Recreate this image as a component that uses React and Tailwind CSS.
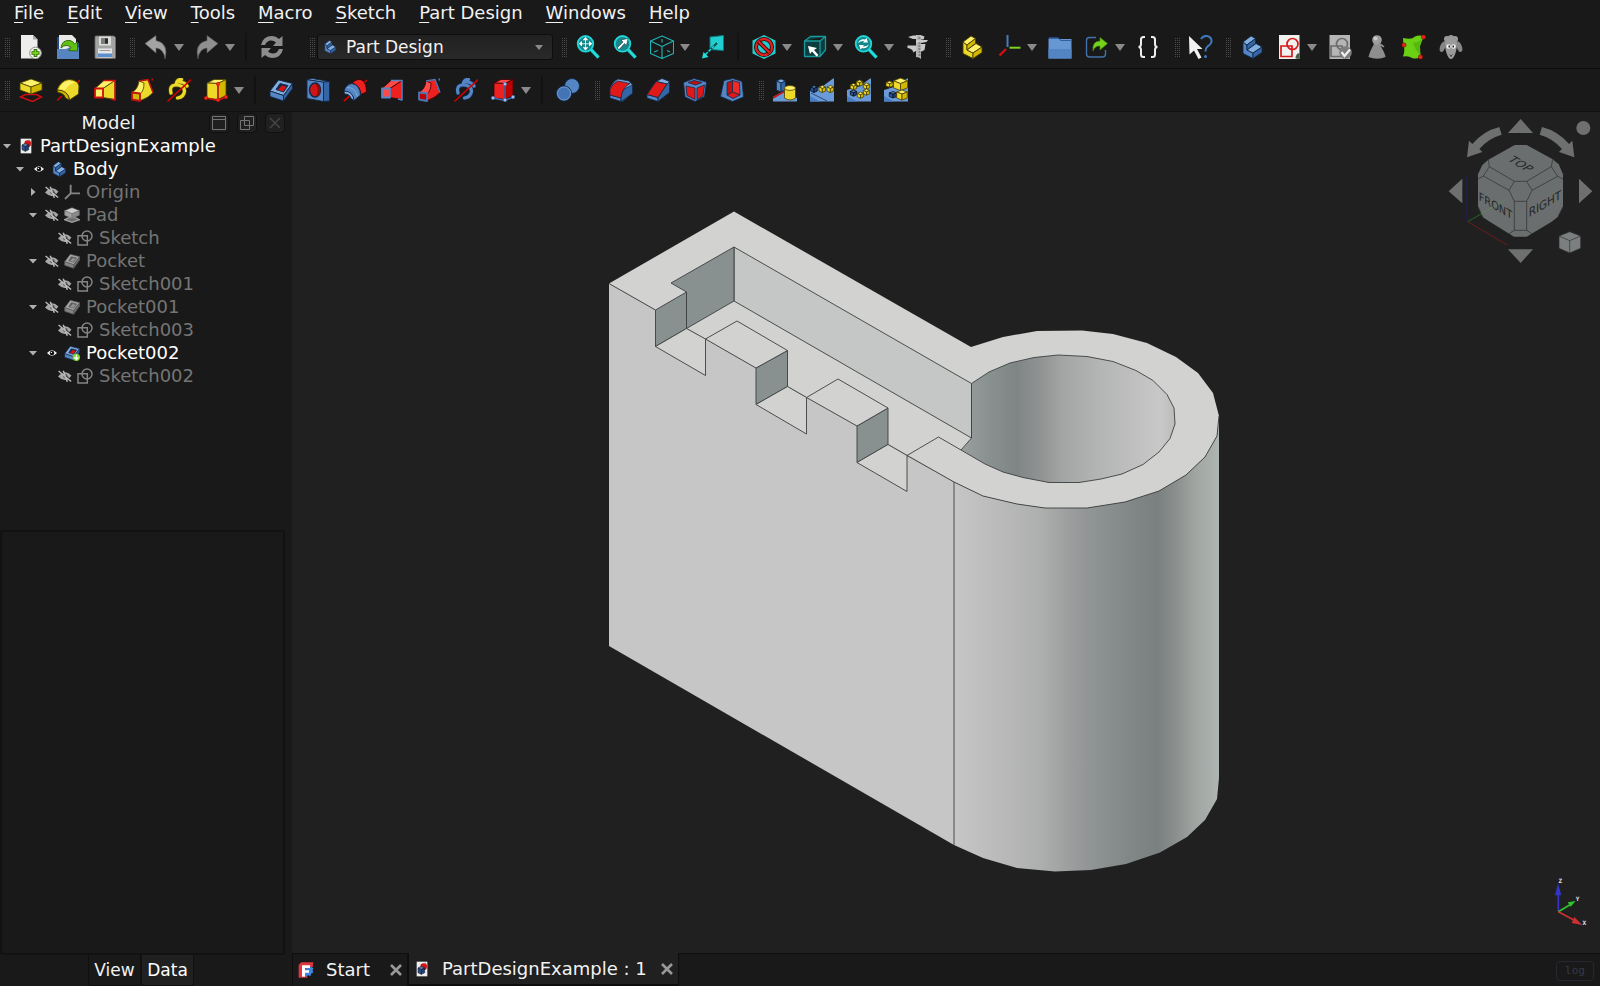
import { useState } from "react";

const YELLOW = { top: "#fdf06a", left: "#edd92a", right: "#d3b800", line: "#4a4000" };
const BLUE = { top: "#82aee0", left: "#5586c4", right: "#3465a4", line: "#12294a" };
const NAVY = { top: "#5a80b8", left: "#2f5590", right: "#20407a", line: "#08111f" };
const RED = { top: "#ff4a4a", left: "#ef2020", right: "#c00000", line: "#3a0000" };

// isometric box, (x, y) is the rear corner of the top face
const Box = ({ x, y, w, d, h, c }) => (
  <g stroke={c.line} strokeWidth="0.8" strokeLinejoin="round">
    <path fill={c.top} d={`M${x} ${y}l${w} ${d}l${-w} ${d}l${-w} ${-d}z`} />
    <path fill={c.left} d={`M${x - w} ${y + d}l${w} ${d}v${h}l${-w} ${-d}z`} />
    <path fill={c.right} d={`M${x + w} ${y + d}l${-w} ${d}v${h}l${w} ${-d}z`} />
  </g>
);

const StepShape = ({ c }) => (
  <g stroke={c.line} strokeWidth="0.9" strokeLinejoin="round">
    <path fill={c.left} d="M3 7l4 3v5l6 3v5.500l-10-5z" />
    <path fill={c.top} d="M3 7l8-6l4.500 2.500l-8.500 6.500z" />
    <path fill={c.right} d="M7 10l8.500-6.500v5l-8.500 6.500z" />
    <path fill={c.top} d="M7 15l9-6.500l6 3.500l-9 6z" />
    <path fill={c.right} d="M13 18l9-6v5.500l-9 6z" />
  </g>
);

const Lens = () => (
  <g>
    <path d="M14.500 14l8 8.500" stroke="#0c6f70" strokeWidth="4" />
    <path d="M14.500 14l8 8.500" stroke="#22dede" strokeWidth="2.600" />
    <circle cx="9.500" cy="8.800" r="7.800" fill="#15868a" stroke="#22d5d6" strokeWidth="1.800" />
  </g>
);

const PocketShape = ({ c, hole = "#d11" }) => (
  <g stroke={c.line} strokeWidth="0.9" strokeLinejoin="round">
    <path fill={c.top} d="M1 13l8.500-11l14 3.500l-9 12z" />
    <path fill={c.left} d="M1 13l13.500 4.500v5.500l-13.500-4.500z" />
    <path fill={c.right} d="M14.500 17.500l9-12v5l-9 12.500z" />
    <path fill={c.line} d="M7 11.500l4-6l8 2l-4.500 6.500z" />
    <path fill={hole} stroke="none" d="M9 11.800l4-4.300l4.500 1.300l-3.500 4.700z" />
  </g>
);

const LoftShape = ({ c, edge }) => (
  <g strokeLinejoin="round">
    <path fill={c.top} stroke={c.line} strokeWidth="0.8" d="M2 10.500l9-8h11l-12 8z" />
    <path fill={c.left} stroke={c.line} strokeWidth="0.8" d="M10 10.500l12-8v19l-12-2z" />
    <path fill="none" stroke={edge} strokeWidth="1.500" d="M11 2.500h11v19.500l-4-1" />
    <path fill={c.top} stroke={edge} strokeWidth="1.800" d="M2 10.500h8v9h-8z" />
  </g>
);

const PipeShape = ({ c, edge }) => (
  <g strokeLinejoin="round">
    <path fill={c.left} stroke={c.line} strokeWidth="0.8" d="M2.500 14Q8 11 9 3l9-1.500l5 13q-4 5-12.500 8z" />
    <path fill={c.top} stroke={c.line} strokeWidth="0.8" d="M2.500 14Q8 11 9 3l5 2Q14 13 10 16z" />
    <path fill="none" stroke={edge} strokeWidth="1.500" d="M9 3l9-1.500l5 13M22.500 .500l-.500 2" />
    <path fill={c.right} stroke={edge} strokeWidth="1.800" d="M2 14.500l8 1v7.500l-8-1.500z" />
  </g>
);

const helixPath = "M4 15Q2 7 9 7q8 0 8.500 6q-.500 6-7 7M9 6.500Q10 1 14.500 1.500M12 4q6 0 8 4";

const HelixShape = ({ c }) => (
  <g fill="none" strokeLinecap="round">
    <path d={helixPath} stroke={c.line} strokeWidth="4.600" />
    <path d={helixPath} stroke={c.left} strokeWidth="3.200" />
    <path d="M1 23L23.500 2" stroke="#d40000" strokeWidth="1.600" />
  </g>
);

const PrimitiveShape = ({ c, edge, dot }) => (
  <g>
    <path fill={c.top} stroke={c.line} strokeWidth="0.8" d="M3 5l7-3.500h12l-8 4z" strokeLinejoin="round" />
    <path fill={c.left} stroke={c.line} strokeWidth="0.8" d="M3 5l11 .500v16l-11-1.500z" strokeLinejoin="round" />
    <path fill={c.right} stroke={c.line} strokeWidth="0.8" d="M14 5.500l8-4v16l-8 4z" strokeLinejoin="round" />
    <path d="M2 20l12 2.500l8-3.500M14 22V6" stroke={edge} strokeWidth="1.400" fill="none" />
    <g fill={dot} stroke={edge} strokeWidth="0.600">
      <circle cx="2" cy="20" r="1.700" />
      <circle cx="14" cy="22" r="1.700" />
      <circle cx="22" cy="19" r="1.700" />
      <circle cx="14" cy="6" r="1.700" />
    </g>
  </g>
);

const DocShape = () => (
  <g>
    <path d="M4 1h16v22h-16z" fill="#eeeeec" />
    <path d="M16 1l4 4h-4z" fill="#babdb6" />
    <circle cx="14.500" cy="8.500" r="5" fill="#cf1515" />
    <Box x={11} y={8} w={5} d={2.5} h={7} c={NAVY} />
  </g>
);

const PlanePatch = () => (
  <g>
    <path d="M0 12l13-4l10-7.500h1v23h-24z" fill="#6a9bd8" />
    <path d="M0 18l10 5.500h-10z" fill="#4a7fc4" />
  </g>
);

const icons = {
  new: (
    <g>
      <path d="M2 0h12l4.500 4.500v19h-16.500z" fill="#ededeb" />
      <path d="M14 0v4.500h4.500z" fill="#a9aba6" />
      <circle cx="16.500" cy="18" r="5.800" fill="#f4f4f2" stroke="#8d8f8a" />
      <path d="M16.500 14v8M12.500 18h8" stroke="#2f6b09" strokeWidth="3.600" />
      <path d="M16.500 14.800v6.400M13.300 18h6.400" stroke="#73d216" strokeWidth="1.800" />
    </g>
  ),
  open: (
    <g>
      <path d="M1 2h5v14h-5zM20 8h3v12h-3z" fill="#204a87" />
      <path d="M3 0h13l4 4v12h-17z" fill="#e9e9e7" />
      <path d="M1 14h9l3-1.500h10v11.500h-22z" fill="#5584c0" />
      <path d="M5 13Q6 4.500 14 5.500q3 .500 4.500 3.500l3-2v9l-9-.500l2.500-3Q10 8 5 13z" fill="#5fbf12" stroke="#2d6306" strokeWidth="0.900" />
    </g>
  ),
  save: (
    <g>
      <path d="M2 2q0-1 1-1h18l1.500 1.500v20q0 1-1 1h-18.500q-1 0-1-1z" fill="#a2a4a1" stroke="#6b6d6a" strokeWidth="0.800" />
      <path d="M6 1.500h12v9h-12z" fill="#dcdcda" />
      <path d="M8 3h7v6h-7z" fill="#7c7e7b" />
      <path d="M12 3.500h3v5h-3z" fill="#2b2b2b" />
      <path d="M5 13.500h14v9h-14z" fill="#e6e6e6" />
      <path d="M5 18.500h14v3.500h-14z" fill="#5c8fd0" />
      <path d="M6.500 15.500h11" stroke="#9a9a9a" />
    </g>
  ),
  undo: <path d="M1 8.500L12 .500v5Q25 8 21 24Q20 14 12 13v5z" fill="#a3a3a3" stroke="#606060" strokeWidth="0.600" />,
  redo: <path d="M23 8.500L12 .500v5Q-1 8 3 24Q4 14 12 13v5z" fill="#8f8f8f" stroke="#505050" strokeWidth="0.600" />,
  refresh: (
    <g fill="#8d8d8d">
      <path d="M1 10Q3 1 12 1q4 0 7 3l3.500-3v10h-9.500l3-3.500q-2-2-5-2q-4 0-6 4.500z" />
      <path d="M23 14Q21 23 12 23q-4 0-7-3l-3.500 3v-10h9.500l-3 3.500q2 2 5 2q4 0 6-4.500z" />
    </g>
  ),
  fitAll: (
    <g>
      <Lens />
      <path d="M9.500 2l2.800 3.300h-5.600zM9.500 15.600l2.800-3.300h-5.600zM2.700 8.800l3.300-2.800v5.600zM16.300 8.800l-3.300-2.800v5.600z" fill="#fff" />
      <path d="M9.500 5v7.500M6 8.800h7" stroke="#fff" strokeWidth="0.800" />
    </g>
  ),
  fitSel: (
    <g>
      <Lens />
      <path d="M4 13l6-6l-2-2l7-1.500l-1.500 7l-2-2l-5.500 6z" fill="#fff" stroke="#123" strokeWidth="0.500" />
    </g>
  ),
  isoView: (
    <g fill="none" stroke="#1fb5b6" strokeWidth="1.100" strokeLinejoin="round">
      <path d="M12 1l11.500 5v12.500l-11.500 5l-11.500-5v-12.500zM.500 6l11.500 5.500l11.500-5.500M12 11.500v12" />
      <path d="M12 4v3.500M4 17l4-1.500M17 15.500l3 1.500" />
    </g>
  ),
  alignView: (
    <g>
      <path d="M9 2l13.500-1.500v15l-13.500-1z" fill="#21cfd0" stroke="#0c7c7d" />
      <path d="M16 8L4 20" stroke="#0b4f50" strokeWidth="2.200" />
      <path d="M13 11L4 20" stroke="#25dede" strokeWidth="1.300" strokeDasharray="3 1.500" />
      <path d="M1 23.500l1.500-6.500l5 5z" fill="#25dede" />
    </g>
  ),
  drawStyle: (
    <g>
      <path d="M12 0l11.500 5.500v13l-11.500 5.500l-11.500-5.500v-13z" fill="#22cdce" />
      <circle cx="12" cy="12" r="8" fill="none" stroke="#280000" strokeWidth="4" />
      <circle cx="12" cy="12" r="8" fill="none" stroke="#d22" strokeWidth="2.400" />
      <path d="M6.500 6.500l11 11" stroke="#280000" strokeWidth="4" />
      <path d="M6.500 6.500l11 11" stroke="#d22" strokeWidth="2.400" />
    </g>
  ),
  selView: (
    <g>
      <path d="M1.500 6l6-4.500h15v13.500l-5.500 6.500h-15.500zM1.500 6h15.500l5.500-4.500M17 6v15.500" fill="#0b3d3e" stroke="#189b9c" strokeWidth="1.300" strokeLinejoin="round" />
      <path d="M5 11l9 2l-3 2l4.500 5l-2 1.500l-4.500-5l-2 2.500z" fill="#fff" />
    </g>
  ),
  zoomRefresh: (
    <g>
      <Lens />
      <path d="M4 8q2-4.500 7-3.500l1.500-1.500l1.500 4.500h-5l1.200-1.500q-3.200-.500-6.200 2zM15 9.500q-2 4.500-7 3.500l-1.500 1.500l-1.500-4.500h5l-1.200 1.500q3.200 .500 6.200-2z" fill="#f2ffff" />
    </g>
  ),
  caliper: (
    <g transform="translate(1.5 0)">
      <path d="M9.500 0h5v24l-2-1.500l-3-.500z" fill="#b4b4b4" />
      <path d="M1.500 2l5-1.500h4v3.500h-4zM14 0l4 1.500l-1 3h-3zM9.500 5h12l-1.500 2l-5.500 1h-5zM1 10.500h9v5l-3 2q-1-4-6-4.500zM14 9h5l-1 6l-4 2z" fill="#c9c9c9" />
      <path d="M12 3h2M12 8h2M12 11h2M12 14h2M12 17h2M12 20h2" stroke="#444" strokeWidth="0.900" />
    </g>
  ),
  part: <StepShape c={YELLOW} />,
  body: <StepShape c={BLUE} />,
  axes: (
    <g fill="none" strokeWidth="2">
      <path d="M10.500 0v12" stroke="#4a7ab8" />
      <path d="M12.500 12.700h11" stroke="#7ed321" />
      <path d="M9 14l-6.500 6.500" stroke="#d31010" strokeWidth="2.400" />
    </g>
  ),
  folder: (
    <g>
      <path d="M1 2h9l2 3h-11z" fill="#204a87" />
      <path d="M.500 4h23v19.500h-23z" fill="#6797d2" />
      <path d="M.500 3.500h10.500l1.500 2h11" stroke="#33609c" fill="none" />
      <path d="M.500 14h23v9.500h-23z" fill="#5384c4" />
    </g>
  ),
  link: (
    <g>
      <path d="M11 2.500h-6.500q-3 0-3 3v13.500q0 3 3 3h13q3 0 3-3v-4" fill="none" stroke="#4072ae" strokeWidth="1.400" />
      <path d="M8 16Q7 6 15 6v-3.500l7.500 6l-7.500 6.500v-4q-5-.500-7 5z" fill="#74d31c" stroke="#3e8a06" strokeWidth="0.700" />
    </g>
  ),
  braces: (
    <path
      d="M9 2h-1.500q-2.500 0-2.500 2.500v4.500q0 3-2.500 3q2.500 0 2.500 3v4.500q0 2.500 2.500 2.500h1.500M15 2h1.500q2.500 0 2.500 2.500v4.500q0 3 2.500 3q-2.500 0-2.500 3v4.500q0 2.500-2.500 2.500h-1.500"
      fill="none"
      stroke="#eeeeec"
      strokeWidth="2"
    />
  ),
  whatsThis: (
    <g>
      <path d="M12 4q2-3.500 6-3q5 1 4.500 6q-1 3-4 4.500q-2 1.500-2 5" fill="none" stroke="#3f79bb" strokeWidth="2" />
      <circle cx="16.500" cy="21.500" r="1.500" fill="#3f79bb" />
      <path d="M0 1l13.500 13h-5.500l4.500 8.500l-3 1.500l-4.500-8.500l-4.500 4z" fill="#f2f2f2" />
    </g>
  ),
  newSketch: (
    <g>
      <path d="M2 0h20.500v24h-20.500z" fill="#f1f1ef" />
      <path d="M18.500 23.500q0-5 4-5.500v6z" fill="#4c5a4c" />
      <g fill="none" stroke="#d51a1a" strokeWidth="1.700">
        <path d="M4 11h11v10.500h-11z" />
        <circle cx="15.500" cy="9" r="5.500" />
      </g>
    </g>
  ),
  validate: (
    <g>
      <path d="M1.500 0h20.500v24h-20.500z" fill="#b5b5b5" />
      <g fill="none" stroke="#6c6c6c" strokeWidth="1.700">
        <path d="M3 11h11v10.500h-11z" />
        <circle cx="14" cy="9" r="5.500" />
      </g>
      <circle cx="17.500" cy="17.500" r="6.300" fill="#7d7d7d" />
      <path d="M13.500 17l3 4l5.500-6.500" fill="none" stroke="#f0f0f0" strokeWidth="2.200" />
    </g>
  ),
  pawn: (
    <g fill="#8e8e8e">
      <path d="M9 8h5l1 2q5 8 5.500 12q-8 3.500-17 0q1-5 5-12z" />
      <circle cx="12" cy="5" r="4.800" fill="#9d9d9d" />
      <circle cx="10.500" cy="3.500" r="2" fill="#c9c9c9" />
      <path d="M14 8q4 1 5.500 3.500l-1 1q-3-2-5-2.500z" />
    </g>
  ),
  binder: (
    <g>
      <path d="M1 3q9 2 12-1.500q4-2 9 0q-3 6-4 10q0 6 1 10q-3 3-9 1.500q-3-2.500-9-1.500q2-5 1-9q-1-5-1-9.500z" fill="#6ad014" />
      <path d="M11 7q5 2 9-4q-3 7-2 17q-5-5-7-13z" fill="#4aa80c" opacity="0.600" />
      <g fill="#e02416" stroke="#7a0e06" strokeWidth="0.500">
        <circle cx="21.500" cy="2" r="2.200" />
        <circle cx="2" cy="10" r="2.200" />
        <circle cx="18.500" cy="22" r="2.200" />
      </g>
    </g>
  ),
  sheep: (
    <g fill="#9a9a9a">
      <path d="M5.500 6Q1 8 .500 15q1 3 3.500 1.500q3-4 2.500-8zM18.500 6Q23 8 23.500 15q-1 3-3.500 1.500q-3-4-2.500-8z" fill="#868686" />
      <path d="M6 7q0-5 6-5t6 5q0 7-1.500 11q-2 6-4.500 6t-4.500-6q-1.500-4-1.500-11z" />
      <circle cx="8" cy="4" r="3" />
      <circle cx="12" cy="3" r="3" />
      <circle cx="16" cy="4" r="3" />
      <circle cx="9.500" cy="11.500" r="2.200" fill="#f2f2f2" />
      <circle cx="14.500" cy="11.500" r="2.200" fill="#f2f2f2" />
      <path d="M9.500 10.500h1.500v2h-1.500zM13.500 10.500h1.500v2h-1.500z" fill="#222" />
      <path d="M10.500 19.500l1.500 1.500l1.500-1.500M12 21v1" stroke="#444" fill="none" />
    </g>
  ),
  pad: (
    <g>
      <path d="M1.500 19l5-2.500h11l5 2.500l-9 4.500z" fill="none" stroke="#d01010" strokeWidth="1.500" />
      <Box x={12} y={1} w={11} d={4} h={7} c={YELLOW} />
    </g>
  ),
  revolution: (
    <g strokeLinejoin="round">
      <path d="M14 12L24 2" stroke="#d40000" strokeWidth="1.600" />
      <path fill={YELLOW.left} stroke={YELLOW.line} strokeWidth="0.9" d="M1 12Q5 2 13 1.500Q22 2 23 8l-.500 8l-9 6Q13 13 1 12z" />
      <path fill={YELLOW.top} d="M3 11Q7 3 13 2.500Q17 3 19 5Q12 6 9 12.500Q6 11 3 11z" />
      <path fill={YELLOW.right} stroke={YELLOW.line} strokeWidth="0.9" d="M1 12Q12 12 13.500 22l-4-2Q8 15 2 14.500z" />
      <path d="M1 22.500l5-4.500" stroke="#d40000" strokeWidth="1.600" />
    </g>
  ),
  loft: <LoftShape c={YELLOW} edge="#d01010" />,
  pipe: <PipeShape c={YELLOW} edge="#c01010" />,
  helix: <HelixShape c={YELLOW} />,
  primitive: <PrimitiveShape c={YELLOW} edge="#d01010" dot="#ee2a1a" />,
  pocket: <PocketShape c={BLUE} />,
  hole: (
    <g stroke={BLUE.line} strokeLinejoin="round" strokeWidth="0.9">
      <path fill={BLUE.left} d="M1 1.500l16.500 2.500v19.500l-16.500-3z" />
      <path fill={BLUE.top} d="M1 1.500l5-1l17.500 3l-6 .500z" />
      <path fill={BLUE.right} d="M17.500 4l6-.500v19.500l-6 .500z" />
      <ellipse cx="9" cy="12" rx="5.500" ry="7" fill="#d01515" strokeWidth="1.400" />
      <path d="M9 5.500q5 5 1 13q4.500 0 4.500-6.500t-5.500-6.500z" fill="#8a0c0c" stroke="none" />
    </g>
  ),
  groove: (
    <g strokeLinejoin="round" strokeWidth="0.9">
      <path d="M1 23L24 2" stroke="#d40000" strokeWidth="1.600" />
      <path fill={RED.left} stroke={RED.line} d="M9 5Q14 0 19 2Q23.500 5 23.500 14l-5.500 2.500Q17 7 9 5z" />
      <path fill={BLUE.left} stroke={BLUE.line} d="M1 13Q3 6 9 5.500Q17 7 17.500 17l-6.500 5.500Q10 14 1 13z" />
      <path fill={BLUE.top} stroke={BLUE.line} d="M1 13Q10 13 11 22.500l-3-2Q7 16 1.500 16z" />
      <path fill="none" stroke={BLUE.top} d="M4 9.500Q12 9 14.500 18.500" />
      <path d="M1 23l5-4.500" stroke="#d40000" strokeWidth="1.600" />
    </g>
  ),
  subLoft: <LoftShape c={RED} edge="#5586c4" />,
  subPipe: <PipeShape c={RED} edge="#4a78b5" />,
  subHelix: <HelixShape c={BLUE} />,
  subPrimitive: <PrimitiveShape c={RED} edge="#3f6fb0" dot="#9cc0ee" />,
  boolean: (
    <g stroke={BLUE.line}>
      <circle cx="16" cy="8" r="7.500" fill="#5586c4" />
      <circle cx="8" cy="15.500" r="7.500" fill="#4474b4" stroke="#12294a" strokeWidth="1" />
      <circle cx="8" cy="15.500" r="6.600" fill="none" stroke="#86b0e4" strokeWidth="0.700" />
    </g>
  ),
  fillet: (
    <g stroke={BLUE.line} strokeLinejoin="round" strokeWidth="0.8">
      <path fill={BLUE.top} d="M1 11q2-7 8-10l11 2l3.500 4v8l-10 8.500l-12.500-4z" />
      <path fill={BLUE.left} d="M1 17l11 3v3.500l-11-3.500z" />
      <path fill={BLUE.right} d="M12 20q0-8 5-10l6.500-3v8.500l-11.500 8z" />
      <path fill="#e01818" d="M1 11.500q2-6 8-8.500l12 2.500q-8 4-9 14.500l-11-3z" />
    </g>
  ),
  chamfer: (
    <g stroke={BLUE.line} strokeLinejoin="round" strokeWidth="0.8">
      <path fill={BLUE.top} d="M10 3.500l6-3l7.500 3l-2.500 2.500z" />
      <path fill={BLUE.left} d="M1 16.500l11 3v4l-11-3.500z" />
      <path fill={BLUE.right} d="M12 19.500l9-13.500l2.500-2.500v11l-11.500 9z" />
      <path fill="#e01818" d="M1 16.500l9-13l11 2.500l-9 13.500z" />
    </g>
  ),
  draft: (
    <g stroke={BLUE.line} strokeLinejoin="round" strokeWidth="0.8">
      <path fill={BLUE.left} d="M.500 4.500l10.500-4l12.500 3.500l-2 14.500l-9.500 5l-10-4.500z" />
      <path fill="#e01818" d="M3 8l9 2v11.500l-8-4zM14 10l7.500-3l-1.500 11l-6 3.500z" />
      <path fill="#c01010" d="M5 4.500l6-2l8 2l-6.500 2.500z" />
    </g>
  ),
  thickness: (
    <g stroke={BLUE.line} strokeLinejoin="round" strokeWidth="0.8">
      <path fill={BLUE.left} d="M4 2.500l9-2l9 3l1.500 15.500l-11 4.500l-12-5z" />
      <path fill="#c01010" d="M7 4.500l5.500-2v11.500l-5.500 3z" />
      <path fill="#ef2a2a" d="M12.500 2.500l7 2l.500 12.500l-7.500-3z" />
      <path fill="#e01818" d="M7 17l5.500-3l7.500 3l-7 3.500z" />
    </g>
  ),
  mirrored: (
    <g>
      <path d="M0 19l12-7l12 8v3.500h-24z" fill="#6a9bd8" />
      <path d="M0 20l17-10" stroke="#cc1010" strokeWidth="1.600" />
      <Box x={8} y={1} w={4.5} d={2} h={9} c={BLUE} />
      <path d="M11.500 10q5.500-4 11 0v10q-5.500 4-11 0z" fill="#edd92a" stroke="#4a4000" strokeWidth="0.8" />
      <ellipse cx="17" cy="10" rx="5.500" ry="2.400" fill="#fdf06a" stroke="#4a4000" strokeWidth="0.8" />
    </g>
  ),
  linear: (
    <g>
      <PlanePatch />
      <path d="M1 15l16 8" stroke="#1a3a68" strokeWidth="0.800" />
      <Box x={4} y={7.5} w={3.3} d={1.5} h={4} c={NAVY} />
      <Box x={12.3} y={7.5} w={3.3} d={1.5} h={4} c={YELLOW} />
      <Box x={20.3} y={7.5} w={3.3} d={1.5} h={4} c={YELLOW} />
    </g>
  ),
  polar: (
    <g>
      <PlanePatch />
      <Box x={12.5} y={2} w={3.2} d={1.4} h={3.4} c={YELLOW} />
      <Box x={6.5} y={5.5} w={3.2} d={1.4} h={3.4} c={YELLOW} />
      <Box x={19.5} y={5} w={3.2} d={1.4} h={3.4} c={YELLOW} />
      <Box x={19.5} y={11} w={3.2} d={1.4} h={3.4} c={YELLOW} />
      <Box x={6.5} y={12} w={3.2} d={1.4} h={3.4} c={NAVY} />
      <Box x={13.5} y={14} w={3.2} d={1.4} h={3.4} c={YELLOW} />
    </g>
  ),
  multi: (
    <g>
      <PlanePatch />
      <Box x={5.5} y={3} w={3.5} d={1.4} h={3.5} c={YELLOW} />
      <Box x={16.5} y={0} w={7} d={2.8} h={7} c={YELLOW} />
      <Box x={9} y={13.5} w={3.7} d={1.4} h={3.7} c={NAVY} />
      <Box x={18} y={12} w={5.3} d={2} h={6} c={YELLOW} />
    </g>
  ),
  doc: <DocShape />,
  origin: <path d="M10 1v13l-8.500 8.500M10 14h14" fill="none" stroke="#858585" strokeWidth="2.800" />,
  padTree: (
    <g>
      <path d="M1 19l6-3h10l6 3l-11 4z" fill="#6c6c6c" stroke="#9c9c9c" strokeWidth="2" />
      <Box x={12} y={1} w={11} d={4.5} h={7} c={{ top: "#cccccc", left: "#a2a2a2", right: "#8a8a8a", line: "#777777" }} />
    </g>
  ),
  pocketTree: <PocketShape c={{ top: "#a5a5a5", left: "#858585", right: "#6c6c6c", line: "#5a5a5a" }} hole="#929292" />,
  pocketTip: (
    <g>
      <PocketShape c={BLUE} />
      <circle cx="18.500" cy="18.500" r="5.500" fill="#7cd823" />
      <path d="M18.500 14.500v7M15.500 18.500l3 3.500l3-3.500" stroke="#fff" strokeWidth="1.800" fill="none" />
    </g>
  ),
  sketchTree: (
    <g fill="none" stroke="#858585" strokeWidth="2.200">
      <path d="M1.500 8.500h14v14h-14z" />
      <circle cx="15" cy="9" r="7.500" />
    </g>
  ),
  eye: (
    <g>
      <path d="M0 12Q12-1 24 12Q12 25 0 12z" fill="#f4f4f4" />
      <circle cx="12" cy="12" r="5.500" fill="#111" />
      <circle cx="10.500" cy="10.500" r="1.600" fill="#fff" />
    </g>
  ),
  eyeOff: (
    <g>
      <path d="M0 13Q11-1 23 11Q13 26 0 13z" fill="#a8a8a8" />
      <circle cx="12.500" cy="12" r="4" fill="#6a6a6a" />
      <path d="M3 2.500l20 17.500" stroke="#1b1b1b" strokeWidth="2" />
      <path d="M1 3.500l21.500 18M9 3l7 19" stroke="#b9b9b9" strokeWidth="2.600" />
    </g>
  ),
  freecad: (
    <g>
      <path d="M1 4l4-3.500h18l-1 7l-8 2v14h-13z" fill="#e0363f" />
      <path d="M13 9h4l2-2l4 2l-1 4l1 3l-3 1l-1 4l-4-1l-3 2l-2-2v-5z" fill="#3f86dd" />
      <path d="M6 5h12v4h-7.500v3.500h6v3.500h-6v6h-4.500z" fill="#fff" />
    </g>
  ),
};

const Icon = ({ name, className = "size-6" }) => (
  <svg viewBox="0 0 24 24" className={`shrink-0 ${className}`} aria-hidden="true">
    {icons[name]}
  </svg>
);

const Grip = () => (
  <svg viewBox="0 0 12 24" className="w-3 h-6 shrink-0" aria-hidden="true" shapeRendering="crispEdges">
    <path d="M5.500 3v19M7.500 3v19M9.500 3v19" stroke="#4b4b4b" strokeDasharray="1 1" />
  </svg>
);

const Divider = () => <div className="mx-1.5 h-7 w-0.5 shrink-0 bg-[#121212]" />;

const Tool = ({ name, label, menu }) => (
  <>
    <button aria-label={label} className="flex h-9 w-[37px] shrink-0 items-center justify-center">
      <Icon name={name} />
    </button>
    {menu && (
      <button aria-label={`${label} options`} className="flex h-9 w-3.5 shrink-0 items-center">
        <svg viewBox="0 0 10 7" className="w-2.5 h-[7px]">
          <path d="M0 0h10l-5 7z" fill="#8a8a8a" />
        </svg>
      </button>
    )}
  </>
);

const Group = ({ items, className = "" }) => (
  <div className={`flex items-center ${className}`}>
    <Grip />
    {items.map(([name, label, menu], i) =>
      name === "|" ? <Divider key={i} /> : <Tool key={i} name={name} label={label} menu={menu} />
    )}
  </div>
);

const menus = ["File", "Edit", "View", "Tools", "Macro", "Sketch", "Part Design", "Windows", "Help"];

const fileTools = [["new", "New"], ["open", "Open"], ["save", "Save"]];
const editTools = [["undo", "Undo", true], ["redo", "Redo", true], ["|"], ["refresh", "Refresh"]];
const viewTools = [
  ["fitAll", "Fit all"],
  ["fitSel", "Fit selection"],
  ["isoView", "Isometric", true],
  ["alignView", "Align to selection"],
  ["|"],
  ["drawStyle", "Draw style", true],
  ["selView", "Selection view", true],
  ["zoomRefresh", "Zoom", true],
  ["caliper", "Measure"],
];
const structureTools = [
  ["part", "Create part"],
  ["axes", "Coordinate system", true],
  ["folder", "Create group"],
  ["link", "Make link", true],
  ["braces", "Expressions"],
];
const helpTools = [["whatsThis", "What's this?"]];
const bodyTools = [
  ["body", "Create body"],
  ["newSketch", "Create sketch", true],
  ["validate", "Validate sketch"],
  ["pawn", "Check geometry"],
  ["binder", "Shape binder"],
  ["sheep", "Clone"],
];
const modelTools = [
  ["pad", "Pad"],
  ["revolution", "Revolution"],
  ["loft", "Additive loft"],
  ["pipe", "Additive pipe"],
  ["helix", "Additive helix"],
  ["primitive", "Additive primitive", true],
  ["|"],
  ["pocket", "Pocket"],
  ["hole", "Hole"],
  ["groove", "Groove"],
  ["subLoft", "Subtractive loft"],
  ["subPipe", "Subtractive pipe"],
  ["subHelix", "Subtractive helix"],
  ["subPrimitive", "Subtractive primitive", true],
  ["|"],
  ["boolean", "Boolean operation"],
];
const dressTools = [
  ["fillet", "Fillet"],
  ["chamfer", "Chamfer"],
  ["draft", "Draft"],
  ["thickness", "Thickness"],
];
const patternTools = [
  ["mirrored", "Mirrored"],
  ["linear", "Linear pattern"],
  ["polar", "Polar pattern"],
  ["multi", "Multi transform"],
];

const tree = [
  { label: "PartDesignExample", icon: "doc", depth: 0, arrow: "down", on: true },
  { label: "Body", icon: "body", depth: 1, arrow: "down", eye: "eye", on: true },
  { label: "Origin", icon: "origin", depth: 2, arrow: "right", eye: "eyeOff" },
  { label: "Pad", icon: "padTree", depth: 2, arrow: "down", eye: "eyeOff" },
  { label: "Sketch", icon: "sketchTree", depth: 3, eye: "eyeOff" },
  { label: "Pocket", icon: "pocketTree", depth: 2, arrow: "down", eye: "eyeOff" },
  { label: "Sketch001", icon: "sketchTree", depth: 3, eye: "eyeOff" },
  { label: "Pocket001", icon: "pocketTree", depth: 2, arrow: "down", eye: "eyeOff" },
  { label: "Sketch003", icon: "sketchTree", depth: 3, eye: "eyeOff" },
  { label: "Pocket002", icon: "pocketTip", depth: 2, arrow: "down", eye: "eye", on: true },
  { label: "Sketch002", icon: "sketchTree", depth: 3, eye: "eyeOff" },
];

const indent = ["pl-0", "pl-[13px]", "pl-[26px]", "pl-[39px]"];

const TreeRow = ({ row }) => (
  <li
    role="treeitem"
    className={`flex h-[23px] items-center gap-1 ${indent[row.depth]} ${row.on ? "text-white" : "text-[#757575]"}`}
  >
    <span className="flex w-3.5 justify-center">
      {row.arrow && (
        <svg viewBox="0 0 8 8" className="size-2">
          <path d={row.arrow === "down" ? "M0 2h8l-4 4.500z" : "M2 0v8l4.500-4z"} fill="#b0b0b0" />
        </svg>
      )}
    </span>
    {row.eye && (
      <button aria-label={`Toggle ${row.label}`}>
        <Icon name={row.eye} className={row.eye === "eye" ? "mx-[3px] size-2.5" : "mx-px size-3.5"} />
      </button>
    )}
    <Icon name={row.icon} className="size-4" />
    <span className="ml-0.5">{row.label}</span>
  </li>
);

const PanelButton = ({ label, children }) => (
  <button aria-label={label} className="flex size-5 items-center justify-center rounded border border-[#101010] bg-[#202020]">
    <svg viewBox="0 0 16 16" className="size-4" fill="none" stroke="#757575">
      {children}
    </svg>
  </button>
);

const CloseMark = ({ label }) => (
  <button aria-label={label}>
    <svg viewBox="0 0 14 14" className="size-3.5">
      <path d="M2 2l10 10M12 2L2 12" stroke="#999" strokeWidth="2.600" />
    </svg>
  </button>
);

const topOuter =
  "M609 283.500L734 211.500L971 347L1003 337L1037 331L1082 330.500L1113 334L1147 343L1176 357L1198 373L1213 393L1219 416L1217 436L1205 457L1186 475L1159 491L1125 502L1087 508L1045 508L1017 504L983 496L954 482z";
const bore =
  "M971.500 383.500L989 372L1010 363L1034 357.500L1058 355L1087 356.500L1113 361.500L1136 370.500L1153 380.500L1167 394.500L1174 408L1175 424L1170 438.500L1159 452L1143 464.500L1122 474L1101 479L1079 482.500L1049 482.500L1023 477.500L1003 472L985 464L961 450L971.500 438z";
const barrel =
  "M954 482L983 496L1017 504L1045 508L1087 508L1125 502L1159 491L1186 475L1205 457L1217 436L1219 416V778L1217 799L1205 820L1187 837L1160 852.500L1126 864L1091 870L1055 871.500L1017 868L983 858L954 845z";

const Model3D = () => (
  <svg viewBox="292 112 1308 841" className="h-full w-full" role="img" aria-label="Pocket002">
    <defs>
      <linearGradient id="barrel" gradientUnits="userSpaceOnUse" x1="954" x2="1219" y1="0" y2="0">
        <stop offset="0" stopColor="#c6c6c6" />
        <stop offset="0.170" stopColor="#bababa" />
        <stop offset="0.330" stopColor="#adafae" />
        <stop offset="0.450" stopColor="#9a9b9c" />
        <stop offset="0.550" stopColor="#8c9191" />
        <stop offset="0.680" stopColor="#808686" />
        <stop offset="0.770" stopColor="#7a807f" />
        <stop offset="0.840" stopColor="#8c9190" />
        <stop offset="0.910" stopColor="#a0a5a2" />
        <stop offset="1" stopColor="#afb5b2" />
      </linearGradient>
      <linearGradient id="bore" gradientUnits="userSpaceOnUse" x1="961" x2="1175" y1="0" y2="0">
        <stop offset="0" stopColor="#9aa09f" />
        <stop offset="0.120" stopColor="#8a9191" />
        <stop offset="0.260" stopColor="#7f8585" />
        <stop offset="0.380" stopColor="#929494" />
        <stop offset="0.480" stopColor="#a4a6a6" />
        <stop offset="0.640" stopColor="#b3b4b4" />
        <stop offset="0.800" stopColor="#bfbfbf" />
        <stop offset="0.930" stopColor="#c8c8c8" />
        <stop offset="1" stopColor="#bcbcbc" />
      </linearGradient>
    </defs>
    <path d="M609 283.500L954 482V845L609 646z" fill="#c6c6c6" />
    <path d={barrel} fill="url(#barrel)" />
    <path d={topOuter} fill="#d2d3d0" />
    <g stroke="#3c3f3f" strokeWidth="0.900" strokeLinejoin="round">
      <path d="M734 247L971.500 383.500V438L734 301z" fill="#c5c6c6" />
      <path d="M671 283L734 247V301L686.500 328.500V292z" fill="#899090" />
      <path d={bore} fill="url(#bore)" />
      <g fill="#899090">
        <path d="M655.500 310L686.500 292V328.500L655.500 346.500z" />
        <path d="M756 368L787.500 350.500V386.500L756 404.500z" />
        <path d="M857 426L888 408V444.500L857 462.500z" />
      </g>
      <g fill="#d2d3d0">
        <path d="M655.500 346.500L686.500 328.500L705.500 339V375.500z" />
        <path d="M756 404.500L787.500 386.500L806.500 397.500V434z" />
        <path d="M857 462.500L888 444.500L907 455.500V491.500z" />
        <path d="M705.500 339L737 321L787.500 350.500L756 368z" />
        <path d="M806.500 397.500L838 379L888 408L857 426z" />
      </g>
      <path
        d="M609 283.500L655.500 310M907 455.500L938.500 437L961 450M907 455.500L954 482L983 496L1017 504L1045 508L1087 508L1125 502L1159 491L1186 475L1205 457L1217 436L1219 416M954 482V845"
        fill="none"
      />
    </g>
  </svg>
);

const curvedArrow = "M238 66L245 89Q205 100 178 132L187 141L141 157L147 107L157 117Q190 78 238 66z";

const NavCube = () => (
  <svg viewBox="0 21 540 489" className="absolute top-0 right-0 h-[163px] w-[180px]" fill="#6e7070">
    <path d="M302 42l37 42h-75zM302 474l37-41h-75zM86 259l41-38v74zM517 259l-40-38v74z" />
    <path d={curvedArrow} />
    <path d={curvedArrow} transform="translate(604 0) scale(-1 1)" />
    <circle cx="490" cy="69" r="21" />
    <path d="M141 213v137" stroke="#1c1c6e" strokeWidth="3" />
    <path d="M143 350l40-23" stroke="#1f6a1f" strokeWidth="3" />
    <path d="M143 350l119 70" stroke="#6a1c1c" strokeWidth="3" />
    <g stroke="#2c2e2e" strokeWidth="2" strokeLinejoin="round">
      <path
        d="M284 120L205 164L187 180L174 208V305L188 336L207 349L282 395H320L395 350L414 335L429 305V208L416 178L398 163L320 120z"
        fill="#6b6e6e"
        stroke="none"
      />
      <path
        d="M205 164L208 185L190 213L174 222M398 163L394 185L413 214L429 222M208 185L283 229H320L394 185M190 213L267 256L283 229M320 229L336 256L413 214M267 256L283 289H320L336 256M283 289V376H320V289M283 376L267 386M320 376L336 386M174 305L188 336M429 305L414 335"
        fill="none"
      />
      <path d="M449 380l33 13v37l-33 14l-32-14v-37z" fill="#7c7f7f" />
      <path d="M417 393l32 14l33-14M449 407v37" fill="none" />
    </g>
    <path d="M183 327l77-44" stroke="#5b8a5b" strokeWidth="2" />
    <g fontFamily="DejaVu Sans" fill="#252727">
      <text transform="matrix(.866 .5 -.866 .5 260 165)" fontSize="36">TOP</text>
      <text transform="matrix(.866 .5 0 1 176 285)" fontSize="34">FRONT</text>
      <text transform="matrix(.866 -.5 0 1 326 337)" fontSize="36">RIGHT</text>
    </g>
  </svg>
);

const AxisCross = () => (
  <svg viewBox="0 0 300 279" className="absolute right-0 bottom-0 h-[93px] w-[100px]">
    <path d="M175 155V100" stroke="#3534c8" strokeWidth="5" />
    <path d="M174 70l10 36h-19z" fill="#3534c8" />
    <path d="M175 155l35-21" stroke="#2fc52f" strokeWidth="5" />
    <path d="M227 123l-15 17l-9-13z" fill="#2fc52f" />
    <path d="M175 155l48 26" stroke="#cc3030" strokeWidth="5" />
    <path d="M247 195l-32-6l8-18z" fill="#cc3030" />
    <g fill="#e5e5e5" fontFamily="DejaVu Sans Mono" fontSize="18" fontWeight="bold" textAnchor="middle">
      <text x="181" y="68">Z</text>
      <text x="233" y="123">Y</text>
      <text x="253" y="195">X</text>
    </g>
  </svg>
);

const App = () => {
  const [propTab, setPropTab] = useState("Data");
  const [docTab, setDocTab] = useState("example");

  return (
    <div className="flex h-screen flex-col overflow-hidden bg-[#191919] font-['DejaVu_Sans',sans-serif] text-[17px] leading-5 text-[#f2f2f2]">
      <nav className="flex h-[26px] shrink-0 items-center gap-[23px] pl-3.5 text-lg leading-5">
        {menus.map((item) => (
          <button key={item} className="whitespace-nowrap">
            <span className="underline decoration-1 underline-offset-3">{item[0]}</span>
            {item.slice(1)}
          </button>
        ))}
      </nav>

      <div className="flex h-[43px] shrink-0 items-center border-b border-[#0d0d0d]">
        <Group items={fileTools} />
        <Group items={editTools} className="ml-0.5" />
        <div className="ml-[15px] flex items-center">
          <Grip />
          <div className="relative">
            <select
              aria-label="Workbench"
              defaultValue="Part Design"
              className="block h-[26px] w-[236px] appearance-none rounded-[3px] border border-[#0e0e0e] bg-linear-to-b from-[#212121] to-[#292929] pl-7 text-[#f2f2f2]"
            >
              <option>Part Design</option>
              <option>Sketcher</option>
            </select>
            <Icon name="body" className="pointer-events-none absolute top-[6px] left-1.5 size-3.5" />
            <svg viewBox="0 0 8 5" className="pointer-events-none absolute top-[11px] right-2.5 h-[5px] w-2">
              <path d="M0 0h8l-4 5z" fill="#8a8a8a" />
            </svg>
          </div>
        </div>
        <Group items={viewTools} className="ml-1" />
        <Group items={structureTools} className="ml-1.5" />
        <Group items={helpTools} className="ml-1" />
        <Group items={bodyTools} className="ml-0.5" />
      </div>

      <div className="flex h-[43px] shrink-0 items-center border-b border-[#121212]">
        <Group items={modelTools} />
        <Group items={dressTools} className="ml-1" />
        <Group items={patternTools} className="ml-1" />
      </div>

      <div className="flex min-h-0 flex-1">
        <aside className="flex w-[292px] shrink-0 flex-col pr-[7px]">
          <div className="flex h-[22px] shrink-0 items-center gap-2 text-lg leading-5">
            <h2 className="flex-1 pl-4 text-center">Model</h2>
            <PanelButton label="Minimize">
              <path d="M1.500 1.500h13v13h-13zM1.500 4.500h13" />
            </PanelButton>
            <PanelButton label="Float">
              <path d="M5.500 1.500h9v9h-9zM1.500 5.500h9v9h-9z" />
            </PanelButton>
            <PanelButton label="Close">
              <path d="M3 3l10 10M13 3L3 13" stroke="#454545" strokeWidth="1.500" />
            </PanelButton>
          </div>
          <ul role="tree" className="min-h-0 flex-[398] overflow-hidden text-lg leading-5">
            {tree.map((row) => (
              <TreeRow key={row.label} row={row} />
            ))}
          </ul>
          <div className="min-h-0 flex-[424] rounded-[3px] border-2 border-[#121212]" />
          <div className="flex h-[31px] shrink-0 pl-[88px]">
            {["View", "Data"].map((tab) => (
              <button
                key={tab}
                onClick={() => setPropTab(tab)}
                className={`h-[31px] w-[53px] rounded-b-sm border border-t-0 border-[#101010] ${
                  propTab === tab ? "bg-[#202020] text-white" : "bg-[#191919]"
                }`}
              >
                {tab}
              </button>
            ))}
          </div>
        </aside>

        <main className="flex min-w-0 flex-1 flex-col">
          <div className="relative min-h-0 flex-1 bg-[#202020]">
            <Model3D />
            <NavCube />
            <AxisCross />
          </div>
          <div className="flex h-[33px] shrink-0 border-t border-[#0e0e0e] text-lg leading-5">
            <div
              className={`flex w-[117px] items-center gap-3 border-r-2 border-l border-[#0e0e0e] pl-[5px] ${
                docTab === "start" ? "bg-[#202020]" : ""
              }`}
            >
              <Icon name="freecad" className="size-4" />
              <button onClick={() => setDocTab("start")}>Start</button>
              <span className="ml-auto flex pr-1">
                <CloseMark label="Close Start" />
              </span>
            </div>
            <div
              className={`-mt-px flex w-[270px] items-center gap-3 border-r border-b-2 border-[#0e0e0e] pl-[5px] ${
                docTab === "example" ? "bg-[#202020]" : ""
              }`}
            >
              <Icon name="doc" className="size-4" />
              <button className="whitespace-nowrap" onClick={() => setDocTab("example")}>
                PartDesignExample : 1
              </button>
              <span className="ml-auto flex pr-1">
                <CloseMark label="Close PartDesignExample" />
              </span>
            </div>
            <button className="mt-[7px] mr-1.5 ml-auto h-5 w-[38px] rounded border border-[#272731] font-['DejaVu_Sans_Mono',monospace] text-[11px] leading-4 text-[#3a3a46]">
              log
            </button>
          </div>
        </main>
      </div>
    </div>
  );
};

export default App;
